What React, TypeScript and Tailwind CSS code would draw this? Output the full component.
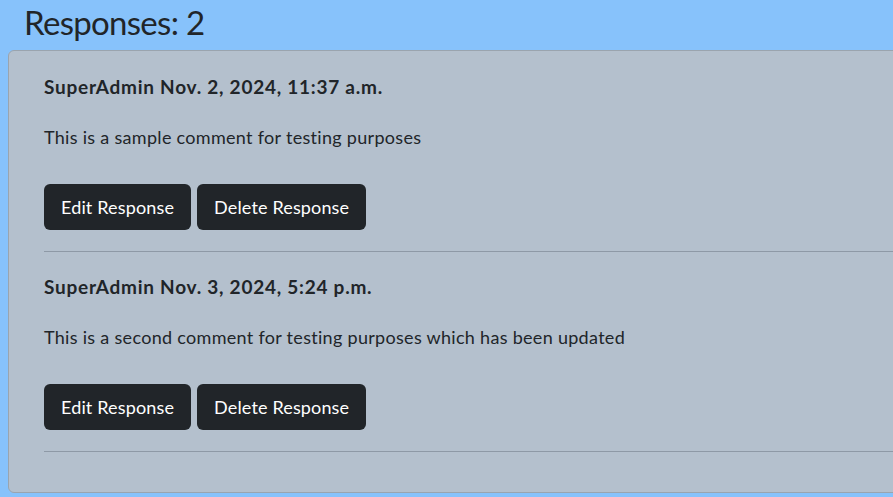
import React from "react";

const items = [
  { head: "SuperAdmin Nov. 2, 2024, 11:37 a.m.", body: "This is a sample comment for testing purposes" },
  { head: "SuperAdmin Nov. 3, 2024, 5:24 p.m.", body: "This is a second comment for testing purposes which has been updated" },
];

export default function App() {
  return (
    <div className="w-[893px] h-[497px] overflow-hidden bg-[#87c2fb] text-[#212529]" style={{ fontFamily: "Lato, 'Noto Sans', sans-serif" }}>
      <h1 className="pl-[24px] pt-[2px] h-[50px] text-[33px] leading-[40px] font-normal tracking-[-0.7px]">Responses: 2</h1>
      <div className="ml-[8px] w-[1000px] h-[443px] rounded-[6px] border border-[#9aa4ae] bg-[#b4c0cd] px-[35px] pt-[23px]">
        {items.map((it, i) => (
          <div key={i} className="w-[900px]">
            <div className="h-[26px] leading-[26px] text-[19px] font-bold tracking-[0.75px]">{it.head}</div>
            <div className="mt-[24px] h-[26px] leading-[26px] text-[18px] tracking-[0.3px]">{it.body}</div>
            <div className="mt-[34px] flex gap-[6px]">
              <button className="h-[46px] px-[17px] rounded-[6px] bg-[#212529] text-white text-[18px] tracking-[0.15px]">Edit Response</button>
              <button className="h-[46px] px-[17px] rounded-[6px] bg-[#212529] text-white text-[18px] tracking-[0.15px]">Delete Response</button>
            </div>
            <div className="mt-[21px] mb-[22px] h-px bg-[#8e99a6]" />
          </div>
        ))}
      </div>
    </div>
  );
}
